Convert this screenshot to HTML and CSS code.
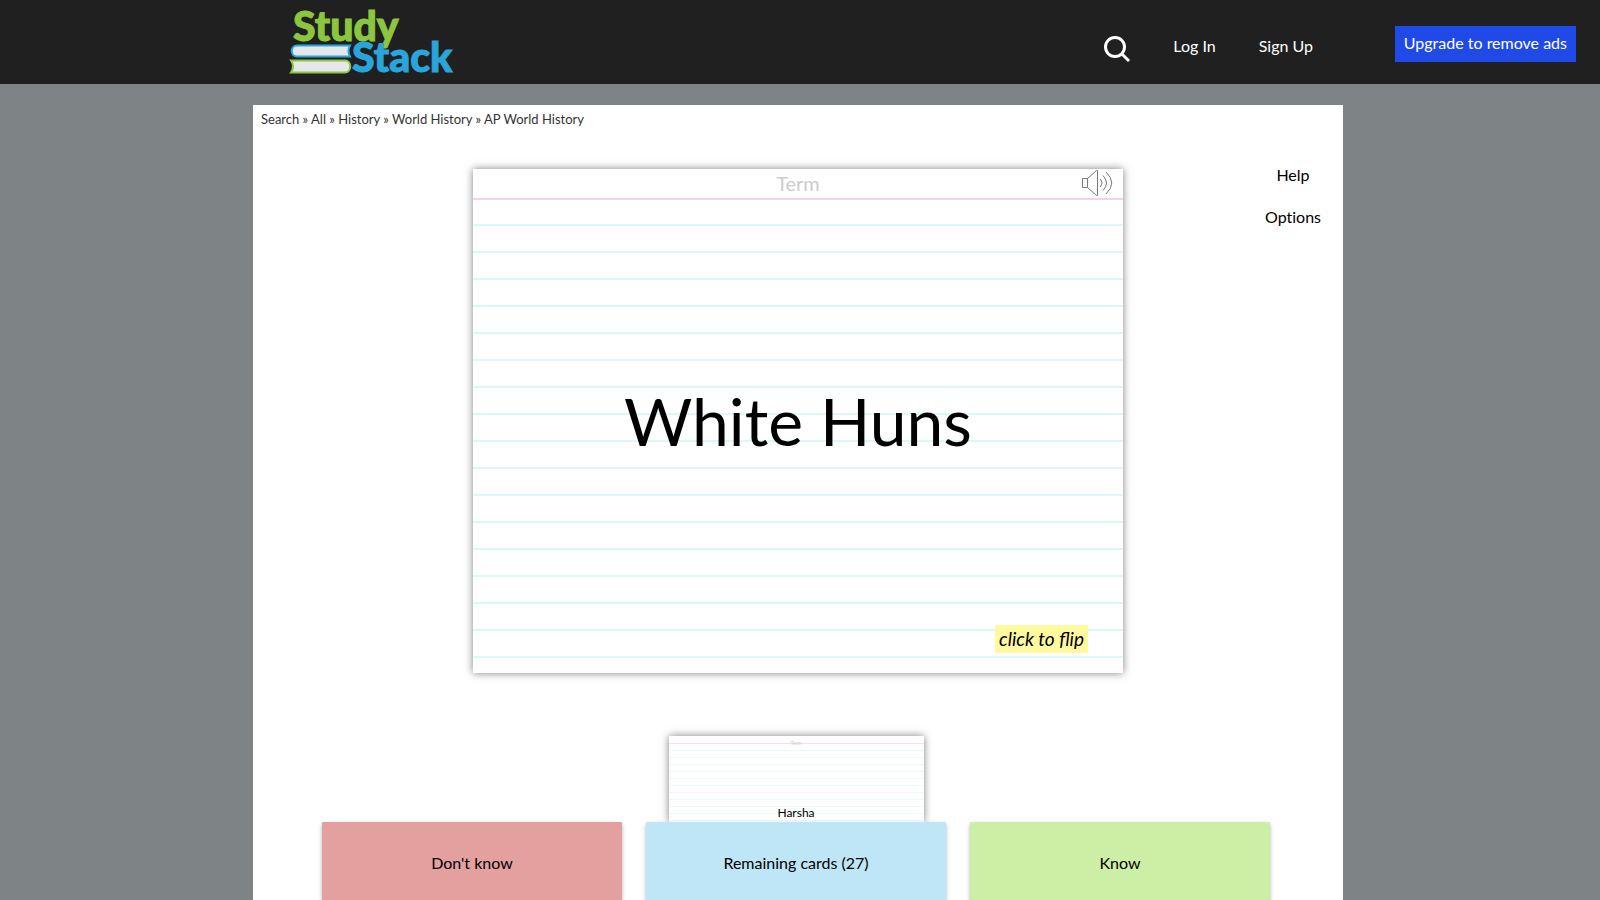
FILE: index.html
```
<!DOCTYPE html>
<html lang="en">
<head>
    <meta charset="utf-8">
    <title>AP World History Flashcards</title>
    <link rel="stylesheet" href="styles.css">
</head>
<body>
    <header class="header">
        <div class="header-inner">
            <a class="logo" href="#" aria-label="StudyStack">
                <svg width="172" height="84" viewBox="288 0 172 84">
                    <path d="M350 45.500H297C290 45.500 290 56.500 297 56.500H350Q347 51 350 45.500Z" fill="#e6e7ea" stroke="#2aa5dc" stroke-width="2"/>
                    <path d="M291 60.500H345C352 60.500 352 72.500 345 72.500H291Q295 66.500 291 60.500Z" fill="#e6e7ea" stroke="#8cc63f" stroke-width="2"/>
                    <text class="logo-text" x="293" y="41" fill="#8cc63f" stroke="#8cc63f">Study</text>
                    <text class="logo-text" x="352" y="72" fill="#2aa5dc" stroke="#2aa5dc">Stack</text>
                </svg>
            </a>
            <nav class="nav">
                <a class="search" href="#" aria-label="Search">
                    <svg width="28" height="28" viewBox="0 0 28 28" fill="none" stroke="#fff" stroke-width="3">
                        <circle cx="13" cy="11" r="9.500"/>
                        <path d="M19.500 17.500L27 25"/>
                    </svg>
                </a>
                <a class="login" href="#">Log In</a>
                <a href="#">Sign Up</a>
            </nav>
        </div>
        <a class="upgrade" href="#">Upgrade to remove ads</a>
    </header>

    <main class="page">
        <nav class="crumbs">
            <a href="#">Search</a> » <a href="#">All</a> » <a href="#">History</a> » <a href="#">World History</a> » <a href="#">AP World History</a>
        </nav>

        <section class="play">
            <div class="card">
                <div class="card-head">
                    <span>Term</span>
                    <button class="speak" aria-label="Speak">
                        <svg width="32" height="28" viewBox="0 0 32 28" fill="none" stroke="#777" stroke-width="1">
                            <path d="M1.500 9.500H6.500V18.500H1.500Z"/>
                            <path d="M6.500 9.500L15.500 1.500H16.500V26.500H15.500L6.500 18.500"/>
                            <path d="M19 10Q23 14 19 18M22 6.500Q29 14 22 21.500M25 3Q36.500 14 25 25"/>
                        </svg>
                    </button>
                </div>
                <div class="card-text">White Huns</div>
                <button class="flip">click to flip</button>
            </div>
            <div class="side">
                <button>Help</button>
                <button>Options</button>
            </div>
        </section>

        <div class="next-card">
            <div class="next-head">Term</div>
            <div class="next-text">Harsha</div>
        </div>

        <section class="stacks">
            <button class="stack wrong">Don't know</button>
            <button class="stack remaining">Remaining cards (27)</button>
            <button class="stack right">Know</button>
        </section>
    </main>
</body>
</html>
```
FILE: styles.css
```
* {box-sizing: border-box;}
body {
    margin: 0;
    min-height: 100vh;
    display: flex;
    flex-direction: column;
    background: #7e8386;
    color: #000;
    font: 16px/20px Lato, "Liberation Sans", sans-serif;
    font-variant-ligatures: none;
}
a {color: inherit; text-decoration: none;}
button {
    padding: 0;
    border: 0;
    background: none;
    color: inherit;
    font: inherit;
    cursor: pointer;
}
svg {display: block;}

/* header */
.header {
    display: grid;
    grid-template-columns: 1fr minmax(0, 1090px) 1fr;
    height: 84px;
    padding-right: 4px;
    background: #202020;
    color: #fff;
}
.header-inner {
    grid-column: 2;
    display: flex;
    justify-content: space-between;
    padding: 0 30px 0 35px;
}
.logo-text {font: 900 41px Lato, sans-serif;}
.nav {display: flex; align-items: flex-start; padding-top: 36px;}
.login {margin: 0 43px;}
.upgrade {
    justify-self: end;
    height: 36px;
    margin: 26px 20px 0 0;
    padding: 7px 9px;
    background: #1f4ae8;
    white-space: nowrap;
}

/* content */
.page {
    flex: 1;
    display: flex;
    flex-direction: column;
    align-self: center;
    width: 100%;
    max-width: 1094px;
    margin-top: 21px;
    border-right: 4px solid #7e8386;
    background: #fff;
}
.crumbs {padding: 4px 8px; color: #333; font-size: 13px;}
.play {
    display: grid;
    grid-template-columns: 1fr minmax(0, 650px) 1fr;
    margin-top: 36px;
}
.card {
    grid-column: 2;
    display: flex;
    flex-direction: column;
    height: 504px;
    background: repeating-linear-gradient(#fff 0, #fff 25px, #d9f8f8 25px, #d9f8f8 27px) 0 30px no-repeat #fff;
    box-shadow: 0 0 8px rgba(0, 0, 0, .5);
}
.card-head {
    position: relative;
    height: 31px;
    border-bottom: 2px solid #f7d0ee;
    background: #fff;
    color: #ccc;
    font-size: 20px;
    line-height: 29px;
    text-align: center;
}
.speak {position: absolute; top: 0; right: 10px;}
.card-text {
    flex: 1;
    display: flex;
    align-items: center;
    justify-content: center;
    padding-top: 16px;
    font-size: 66px;
    line-height: 80px;
}
.flip {
    align-self: flex-end;
    margin: 0 35px 20px 0;
    padding: 0 4px;
    background: #fffaa0;
    font-size: 19px;
    font-style: italic;
    font-variant-ligatures: normal;
    line-height: 28px;
}
.side {
    display: flex;
    flex-direction: column;
    justify-self: end;
    width: 100px;
    gap: 22px;
    margin-top: -4px;
}

.next-card {
    align-self: center;
    width: 255px;
    height: 86px;
    margin: 63px 4px 0 0;
    background: repeating-linear-gradient(#fff 0, #fff 6px, #e8fafa 6px, #e8fafa 7px) 0 8px no-repeat #fff;
    box-shadow: 0 0 8px rgba(0, 0, 0, .5);
    text-align: center;
}
.next-head {
    height: 8px;
    padding-top: 4px;
    border-bottom: 1px solid #f3e0f0;
    color: #ccc;
    font-size: 5px;
    line-height: 6px;
}
.next-text {padding-top: 59px; font-size: 12px;}
.stacks {
    position: relative;
    flex: 1;
    display: flex;
    justify-content: center;
    gap: 24px;
    padding-right: 4px;
}
.stack {
    flex: 0 1 300px;
    display: flex;
    justify-content: center;
    padding-top: 31px;
    border-radius: 1px;
    box-shadow: 0 2px 4px rgba(0, 0, 0, .3);
}
.wrong {background: #e49f9f;}
.remaining {background: #bfe6f6;}
.right {background: #cdeea5;}
```
